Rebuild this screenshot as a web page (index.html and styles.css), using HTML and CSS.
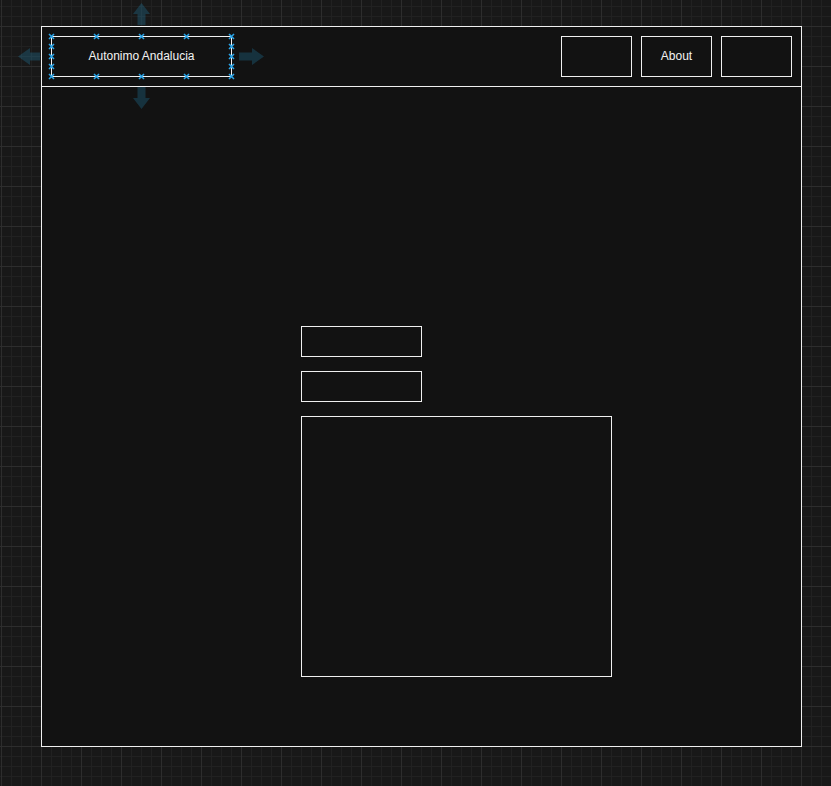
FILE: index.html
```html
<!DOCTYPE html>
<html lang="es">
<head>
<meta charset="utf-8">
<title>Autonimo Andalucia</title>
<link rel="stylesheet" href="styles.css">
</head>
<body>
<div class="canvas">
  <div class="frame">
    <header class="header">
      <div class="logo">Autonimo Andalucia</div>
      <nav class="nav">
        <div class="nav-btn"></div>
        <div class="nav-btn">About</div>
        <div class="nav-btn"></div>
      </nav>
    </header>
    <main class="main">
      <div class="field"></div>
      <div class="field"></div>
      <div class="textarea"></div>
    </main>
  </div>
</div>
<svg class="selection" width="831" height="786" viewBox="0 0 831 786" aria-hidden="true">
  <g class="arrows">
    <polygon points="141.5,3 133,14 137.5,14 137.5,25 145.5,25 145.5,14 150,14"/>
    <polygon points="141.5,109 133,98 137.5,98 137.5,87 145.5,87 145.5,98 150,98"/>
    <polygon points="18,56.5 30,48 30,52.5 40,52.5 40,60.5 30,60.5 30,65"/>
    <polygon points="264,56.5 252,48 252,52.5 239,52.5 239,60.5 252,60.5 252,65"/>
  </g>
  <g class="handles">
    <path d="M49 34l5 5m0 -5l-5 5"/>
    <path d="M94 34l5 5m0 -5l-5 5"/>
    <path d="M139 34l5 5m0 -5l-5 5"/>
    <path d="M184 34l5 5m0 -5l-5 5"/>
    <path d="M229 34l5 5m0 -5l-5 5"/>
    <path d="M49 74l5 5m0 -5l-5 5"/>
    <path d="M94 74l5 5m0 -5l-5 5"/>
    <path d="M139 74l5 5m0 -5l-5 5"/>
    <path d="M184 74l5 5m0 -5l-5 5"/>
    <path d="M229 74l5 5m0 -5l-5 5"/>
    <path d="M49 44l5 5m0 -5l-5 5"/>
    <path d="M49 54l5 5m0 -5l-5 5"/>
    <path d="M49 64l5 5m0 -5l-5 5"/>
    <path d="M229 44l5 5m0 -5l-5 5"/>
    <path d="M229 54l5 5m0 -5l-5 5"/>
    <path d="M229 64l5 5m0 -5l-5 5"/>
  </g>
</svg>
</body>
</html>
```
FILE: styles.css
```css
html, body {
  margin: 0;
  padding: 0;
}

body {
  position: relative;
  width: 831px;
  height: 786px;
  overflow: hidden;
  font-family: "Liberation Sans", Arial, Helvetica, sans-serif;
  color: #f2f2f2;
  background-color: #181818;
  background-image:
    linear-gradient(to right, #2d2d2d 1px, transparent 1px),
    linear-gradient(to bottom, #2d2d2d 1px, transparent 1px),
    linear-gradient(to right, #212121 1px, transparent 1px),
    linear-gradient(to bottom, #212121 1px, transparent 1px);
  background-size: 40px 40px, 40px 40px, 10px 10px, 10px 10px;
  background-position: 1px 26px, 1px 26px, 1px 6px, 1px 6px;
}

.canvas {
  padding: 26px 0 0 41px;
}

.frame {
  box-sizing: border-box;
  width: 761px;
  height: 721px;
  border: 1px solid #f0f0f0;
  background: #121212;
  display: flex;
  flex-direction: column;
}

.header {
  box-sizing: border-box;
  height: 60px;
  border-bottom: 1px solid #f0f0f0;
  padding: 0 9px;
  display: flex;
  align-items: center;
  justify-content: space-between;
}

.logo {
  box-sizing: border-box;
  width: 181px;
  height: 41px;
  padding-bottom: 2px;
  border: 1px solid #f0f0f0;
  display: flex;
  align-items: center;
  justify-content: center;
  font-size: 12px;
}

.nav {
  display: flex;
  gap: 9px;
}

.nav-btn {
  box-sizing: border-box;
  width: 71px;
  height: 41px;
  padding-bottom: 2px;
  border: 1px solid #f0f0f0;
  display: flex;
  align-items: center;
  justify-content: center;
  font-size: 12px;
}

.main {
  flex: 1;
  padding: 239px 0 0 259px;
  display: flex;
  flex-direction: column;
  align-items: flex-start;
  gap: 14px;
}

.field {
  box-sizing: border-box;
  width: 121px;
  height: 31px;
  border: 1px solid #f0f0f0;
}

.textarea {
  box-sizing: border-box;
  width: 311px;
  height: 261px;
  border: 1px solid #f0f0f0;
}

.selection {
  position: absolute;
  left: 0;
  top: 0;
  pointer-events: none;
}

.arrows polygon {
  fill: #29b6f2;
  fill-opacity: 0.2;
}

.handles path {
  fill: none;
  stroke: #2aa3e6;
  stroke-width: 1.6;
}
```
